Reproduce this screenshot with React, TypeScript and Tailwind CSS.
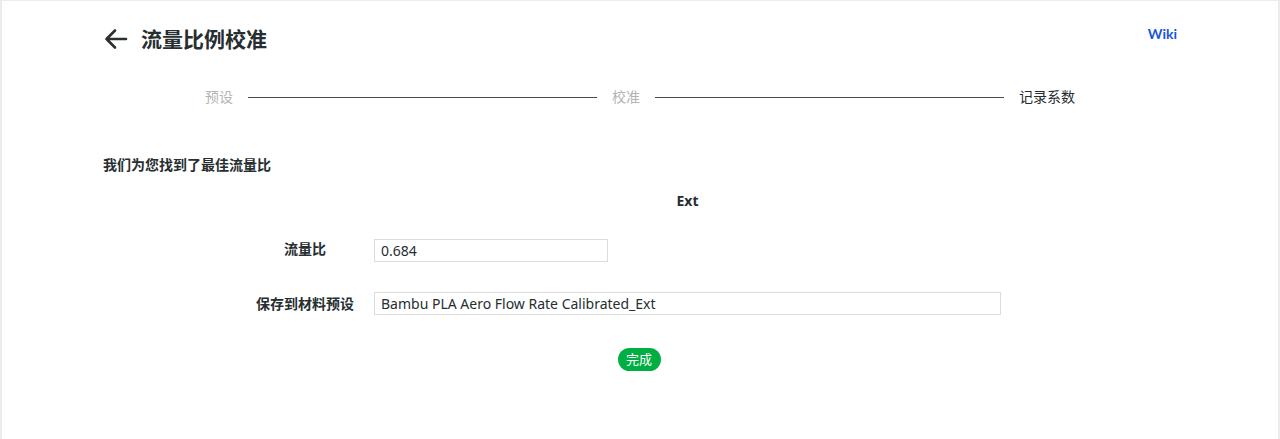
import React from "react";

export default function App() {
  const font = { fontFamily: '"Noto Sans", "Noto Sans CJK SC", sans-serif' };
  return (
    <div
      className="w-[1280px] h-[439px] bg-white border-l-2 border-r-2 border-t border-[#ececec] overflow-hidden text-[#262e30]"
      style={font}
    >
      <div className="px-[101px]">
        {/* header */}
        <div className="mt-[24px] h-[28px] flex items-center justify-between">
          <div className="flex items-center">
            <svg width="26" height="26" viewBox="0 0 26 26" fill="none" className="mr-[12px]">
              <path d="M23 13H3.5M12 4.5L3.5 13 12 21.5" stroke="#2b2f31" strokeWidth="2.6" strokeLinecap="round" strokeLinejoin="round" />
            </svg>
            <span className="text-[21px] font-bold leading-none">流量比例校准</span>
          </div>
          <span className="text-[14px] font-bold text-[#1a55e0] mt-[-12px]" style={{ fontFamily: 'Lato, "Noto Sans", sans-serif' }}>Wiki</span>
        </div>

        {/* steps */}
        <div className="mt-[33px] h-[20px] px-[102px] flex items-center text-[14px]">
          <span className="text-[#b3b3b3]">预设</span>
          <div className="flex-1 h-px bg-[#4a4a4a] mx-[15px] mt-[2px]" />
          <span className="text-[#b3b3b3]">校准</span>
          <div className="flex-1 h-px bg-[#4a4a4a] mx-[15px] mt-[2px]" />
          <span className="text-[#262e30]">记录系数</span>
        </div>

        {/* found */}
        <div className="mt-[48px] h-[20px] flex items-center text-[14px] font-bold">
          我们为您找到了最佳流量比
        </div>
      </div>

      {/* Ext */}
      <div className="mt-[16px] h-[20px] flex items-center pl-[234px]">
        <div className="w-[138px]" />
        <div className="w-[627px] text-center text-[14px] font-bold">Ext</div>
      </div>

      {/* row 1 */}
      <div className="mt-[29px] h-[23px] flex items-center pl-[234px]">
        <div className="w-[138px] text-center text-[14px] font-bold -mt-[4px]">流量比</div>
        <div className="w-[234px] h-[23px] border border-[#dcdcdc] flex items-center px-[6px] text-[14px]">0.684</div>
      </div>

      {/* row 2 */}
      <div className="mt-[30px] h-[23px] flex items-center pl-[234px]">
        <div className="w-[138px] text-center text-[14px] font-bold">保存到材料预设</div>
        <div className="w-[627px] h-[23px] border border-[#dcdcdc] flex items-center px-[6px] text-[14px]">
          Bambu PLA Aero Flow Rate Calibrated_Ext
        </div>
      </div>

      {/* button */}
      <div className="mt-[33px] flex justify-center pr-[2px]">
        <button className="w-[43px] h-[23px] rounded-full bg-[#00ae42] text-white text-[13px] flex items-center justify-center">
          完成
        </button>
      </div>
    </div>
  );
}
